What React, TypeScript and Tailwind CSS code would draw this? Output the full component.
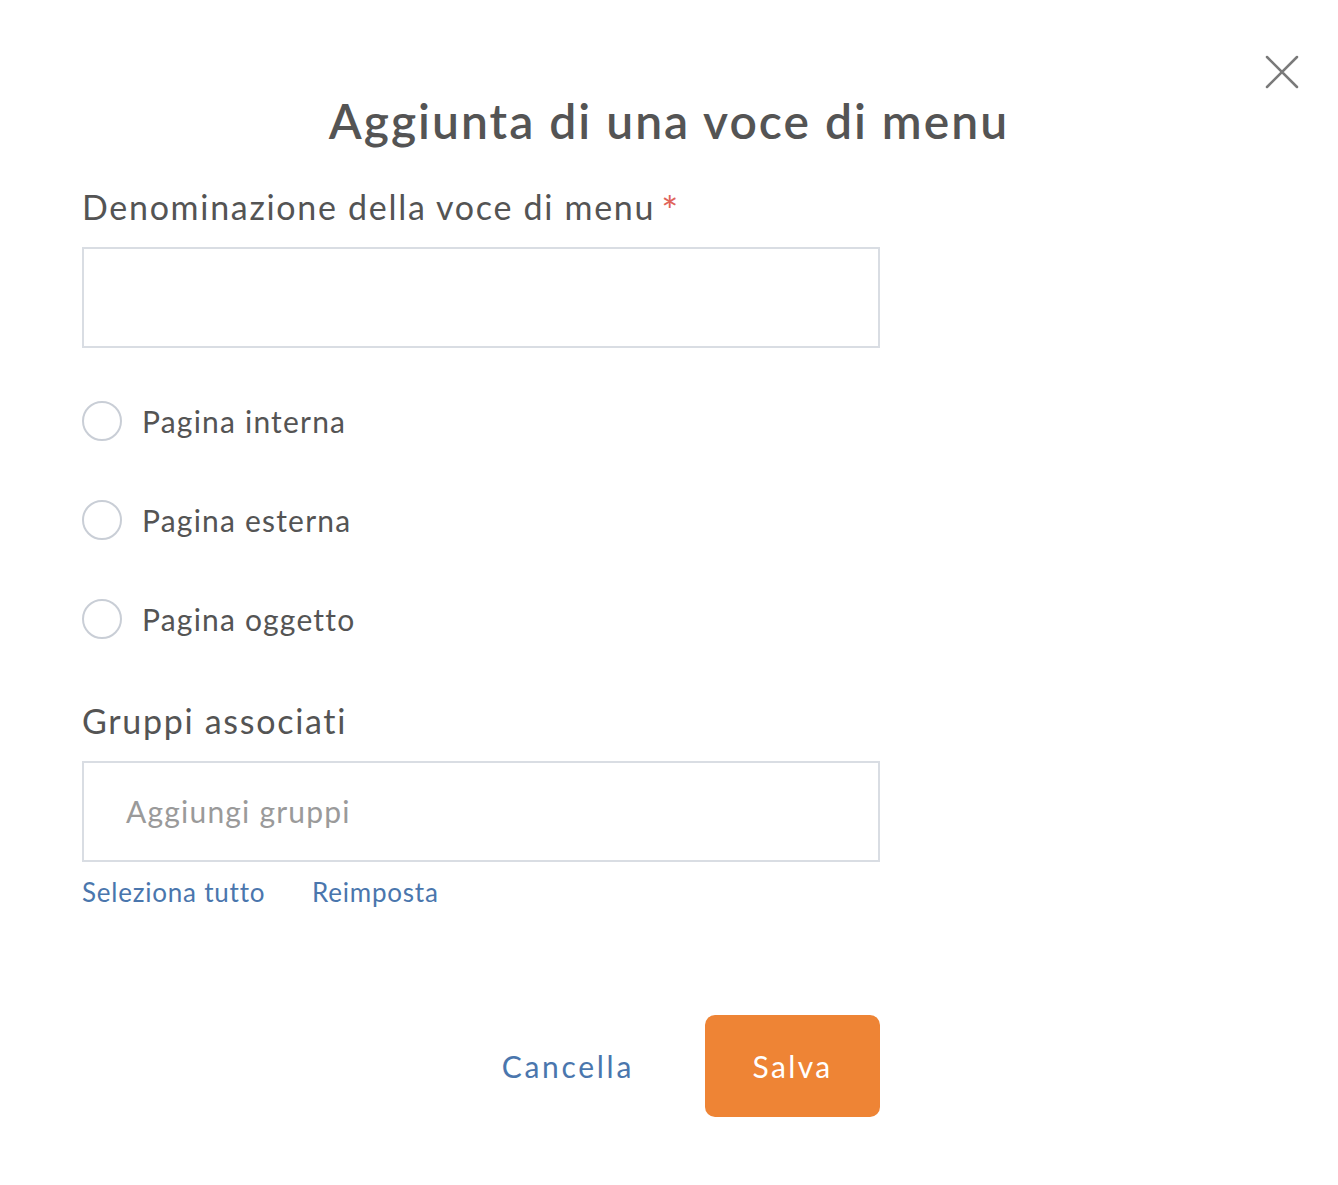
import React from "react";

const font = { fontFamily: "Lato, 'Noto Sans', sans-serif" };

function Radio({ label }: { label: string }) {
  return (
    <div className="flex items-center h-[40px]">
      <div className="w-[40px] h-[40px] rounded-full border-2 border-[#c9ced6] bg-white shrink-0" />
      <span className="ml-[20px] text-[30px] tracking-[0.04em] text-[#545454] leading-[40px]">{label}</span>
    </div>
  );
}

export default function App() {
  return (
    <div className="relative w-full h-[1185px] bg-white text-[#545454]" style={font}>
      <button className="absolute left-[1265px] top-[55px] w-[34px] h-[34px] flex items-center justify-center">
        <svg width="34" height="34" viewBox="0 0 34 34">
          <path d="M2 2 L32 32 M32 2 L2 32" stroke="#7a7a7a" strokeWidth="2.5" strokeLinecap="round" />
        </svg>
      </button>
      <div className="pt-[93px]">
        <h1 className="text-center text-[48px] tracking-[0.042em] font-semibold leading-[56px] text-[#545454]">
          Aggiunta di una voce di menu
        </h1>
        <div className="pl-[82px] w-[880px]">
          <div className="mt-[38px] h-[40px] leading-[40px] text-[34px] tracking-[0.05em] text-[#545454] flex items-start">
            <span>Denominazione della voce di menu</span>
            <span className="text-[#e0645a] text-[40px] ml-[6px] leading-[40px] mt-[4px]">*</span>
          </div>
          <div className="mt-[20px] h-[101px] border-2 border-[#d9dde3] bg-white" />
          <div className="mt-[53px] flex flex-col gap-[59px]">
            <Radio label="Pagina interna" />
            <Radio label="Pagina esterna" />
            <Radio label="Pagina oggetto" />
          </div>
          <div className="mt-[62px] h-[40px] leading-[40px] text-[34px] tracking-[0.05em] text-[#545454]">Gruppi associati</div>
          <div className="mt-[20px] h-[101px] border-2 border-[#d9dde3] bg-white flex items-center pl-[42px]">
            <span className="text-[30px] tracking-[0.04em] text-[#9a9a9a]">Aggiungi gruppi</span>
          </div>
          <div className="mt-[15px] h-[30px] flex items-center text-[26px] tracking-[0.03em] text-[#4a76ad]">
            <span className="w-[230px]">Seleziona tutto</span>
            <span>Reimposta</span>
          </div>
          <div className="mt-[108px] flex justify-end items-center">
            <span className="text-[30px] tracking-[0.09em] text-[#4a76ad] mr-[71px]">Cancella</span>
            <button className="w-[175px] h-[102px] rounded-[10px] bg-[#ee8435] text-white text-[30px] tracking-[0.08em]">
              Salva
            </button>
          </div>
        </div>
      </div>
    </div>
  );
}
